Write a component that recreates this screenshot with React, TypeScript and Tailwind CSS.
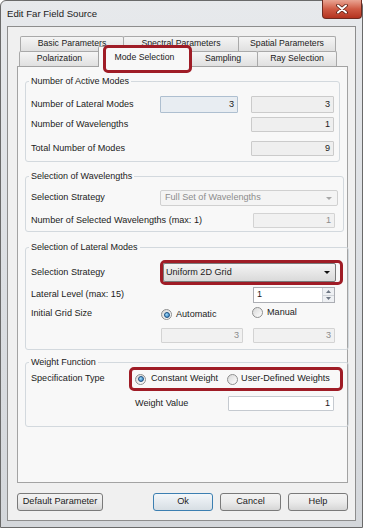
import type { ReactNode } from "react";

type Tone = "ro" | "focus" | "dis" | "white";

const toneClass: Record<Tone, string> = {
  ro: "bg-[#efefef] border-[#cbcbcb] text-[#1b1b1b]",
  focus: "bg-[#e8edf2] border-[#aebfd0] text-[#1b1b1b]",
  dis: "bg-[#f1f1f1] border-[#d3d3d3] text-[#8c8c8c]",
  white: "bg-white border-[#c5cad0] text-[#1b1b1b]",
};

const Box = ({ value, tone = "ro", className = "" }: { value: string; tone?: Tone; className?: string }) => (
  <div className={`flex shrink-0 items-center justify-end rounded-[1px] border pr-[3px] ${toneClass[tone]} ${className}`}>
    {value}
  </div>
);

const Radio = ({ checked = false }: { checked?: boolean }) => (
  <span className="flex h-[11px] w-[11px] shrink-0 items-center justify-center rounded-full border border-[#8e8f8f] bg-linear-to-br from-[#d8d8d8] to-white">
    {checked && (
      <span className="h-[6px] w-[6px] rounded-full border border-[#1b4f80] bg-[radial-gradient(circle_at_35%_35%,#9fdcfb,#2a74b8)]" />
    )}
  </span>
);

const Arrow = ({ color }: { color: string }) => (
  <svg width="6" height="3" viewBox="0 0 6 3">
    <polygon points="0,0 6,0 3,3" fill={color} />
  </svg>
);

const Tab = ({ children, className = "" }: { children: ReactNode; className?: string }) => (
  <div
    className={`-ml-px flex shrink-0 items-center justify-center rounded-t-[2px] border border-b-0 border-[#a9a9a9] bg-linear-to-b from-[#f5f5f5] to-[#e0e0e0] text-[8.7px] first:ml-0 ${className}`}
  >
    {children}
  </div>
);

const Group = ({ title, children, className = "" }: { title: string; children: ReactNode; className?: string }) => (
  <fieldset className={`rounded-[3px] border border-[#d3d9de] px-[5px] ${className}`}>
    <legend className="-ml-[2px] px-[2px] text-[9px] leading-[12px]">{title}</legend>
    {children}
  </fieldset>
);

const Button = ({ children, className = "", primary = false }: { children: ReactNode; className?: string; primary?: boolean }) => (
  <button
    className={`flex h-[18px] shrink-0 items-center justify-center rounded-[3px] border text-[9.2px] ${
      primary
        ? "border-[#3c7fb1] bg-linear-to-b from-[#f3f7fa] to-[#d7dee4]"
        : "border-[#7a7a7a] bg-linear-to-b from-[#f3f3f3] via-[#ebebeb] to-[#d6d6d6]"
    } ${className}`}
  >
    {children}
  </button>
);

const CloseButton = () => (
  <div className="-mt-px flex h-[19px] w-[40px] items-center justify-center rounded-b-[4px] border border-t-0 border-[#6e2a20] bg-linear-to-b from-[#e9a493] via-[#cf5a44] to-[#b3321f]">
    <svg width="12" height="10" viewBox="0 0 12 10">
      <path d="M2 1.5 L10 8.5 M10 1.5 L2 8.5" stroke="#5a1d12" strokeWidth="3.6" strokeLinecap="round" />
      <path d="M2 1.5 L10 8.5 M10 1.5 L2 8.5" stroke="#ffffff" strokeWidth="2" strokeLinecap="round" />
    </svg>
  </div>
);

export default function App() {
  return (
    <div className="h-[531px] w-[367px] bg-white font-['Liberation_Sans',Arial,sans-serif] text-[#1b1b1b]">
      <div className="flex h-[528px] w-[363px] flex-col rounded-t-[6px] border border-[#6a6a6a] bg-linear-to-b from-[#e7e9ec] via-[#dcdfe3] to-[#d4d7db]">
        {/* Title bar */}
        <div className="flex h-[25px] shrink-0 items-start justify-between">
          <span className="ml-[6px] mt-[7px] text-[9.6px] leading-[12px]">Edit Far Field Source</span>
          <CloseButton />
        </div>

        {/* Client area */}
        <div className="mx-[6px] mb-[6px] flex flex-1 flex-col border border-[#8d8d8d] bg-[#f0f0f0] pb-[9px] pl-[9px] pr-[7px] pt-[9px] text-[9.1px]">
          {/* Tabs */}
          <div className="flex h-[15px] pl-[3px]">
            <Tab className="w-[104px]">Basic Parameters</Tab>
            <Tab className="w-[116px]">Spectral Parameters</Tab>
            <Tab className="w-[98px]">Spatial Parameters</Tab>
          </div>
          <div className="flex h-[15px] pl-[2px]">
            <Tab className="w-[81px]">Polarization</Tab>
            <div className="relative z-10 -mx-[2px] -mt-[5px] flex h-[21px] w-[93px] shrink-0 items-start justify-center rounded-t-[2px] border border-b-0 border-[#a3a3a3] bg-[#f8f8f8] pt-[4px] text-[8.7px]">
              Mode Selection
              <div className="absolute left-[4px] top-[-2px] h-[28px] w-[89px] rounded-[5px] border-[3px] border-[#9f1c26]" />
            </div>
            <Tab className="w-[70px]">Sampling</Tab>
            <Tab className="w-[80px]">Ray Selection</Tab>
          </div>

          {/* Tab page */}
          <div className="flex flex-1 flex-col border border-[#a3a3a3] bg-[#f8f8f8] px-[7px] pt-[8px]">
            <Group title="Number of Active Modes" className="pb-[5px]">
              <div className="mt-[9px] flex h-[17px] items-center">
                <span className="w-[129px] shrink-0">Number of Lateral Modes</span>
                <Box tone="focus" value="3" className="h-[17px] w-[78px]" />
                <Box value="3" className="ml-[13px] h-[17px] w-[83px]" />
              </div>
              <div className="mt-[4px] flex h-[15px] items-center">
                <span className="w-[220px] shrink-0">Number of Wavelengths</span>
                <Box value="1" className="h-[15px] w-[83px]" />
              </div>
              <div className="mt-[9px] flex h-[15px] items-center">
                <span className="w-[220px] shrink-0">Total Number of Modes</span>
                <Box value="9" className="h-[15px] w-[83px]" />
              </div>
            </Group>

            <Group title="Selection of Wavelengths" className="mt-[8px] pb-[3px]">
              <div className="mt-[8px] flex h-[16px] items-center">
                <span className="w-[129px] shrink-0">Selection Strategy</span>
                <div className="flex h-[16px] w-[178px] shrink-0 items-center justify-between rounded-[2px] border border-[#d0d0d0] bg-[#f4f4f4] pl-[4px] pr-[5px] text-[#8c8c8c]">
                  Full Set of Wavelengths
                  <Arrow color="#a8a8a8" />
                </div>
              </div>
              <div className="mt-[7px] flex h-[15px] items-center">
                <span className="w-[222px] shrink-0">Number of Selected Wavelengths (max: 1)</span>
                <Box tone="dis" value="1" className="h-[15px] w-[82px]" />
              </div>
            </Group>

            <Group title="Selection of Lateral Modes" className="mt-[9px] pb-[6px]">
              <div className="mt-[7px] flex h-[25px] items-center">
                <span className="w-[129px] shrink-0">Selection Strategy</span>
                <div className="flex h-[25px] w-[183px] shrink-0 items-center rounded-[5px] border-[3px] border-[#9f1c26]">
                  <div className="flex h-[19px] w-[173px] items-center justify-between rounded-[2px] border border-[#7a7a7a] bg-linear-to-b from-[#f4f4f4] to-[#dadada] pl-[2px] pr-[5px]">
                    Uniform 2D Grid
                    <Arrow color="#111111" />
                  </div>
                </div>
              </div>
              <div className="mt-[2px] flex h-[16px] items-center">
                <span className="w-[222px] shrink-0">Lateral Level (max: 15)</span>
                <div className="flex h-[16px] w-[82px] shrink-0 items-center justify-between border border-[#abadb3] bg-white pl-[3px]">
                  1
                  <div className="flex h-full w-[12px] flex-col">
                    <div className="flex flex-1 items-center justify-center border-b border-l border-[#cfd3d8] bg-[#eef0f3]">
                      <svg width="5" height="3" viewBox="0 0 5 3">
                        <polygon points="0,3 5,3 2.5,0" fill="#6d7683" />
                      </svg>
                    </div>
                    <div className="flex flex-1 items-center justify-center border-l border-[#cfd3d8] bg-[#eef0f3]">
                      <svg width="5" height="3" viewBox="0 0 5 3">
                        <polygon points="0,0 5,0 2.5,3" fill="#6d7683" />
                      </svg>
                    </div>
                  </div>
                </div>
              </div>
              <div className="mt-[3px] flex h-[16px] items-center">
                <span className="w-[129px] shrink-0">Initial Grid Size</span>
                <div className="flex w-[92px] shrink-0 items-center pl-[1px] pt-[2px]">
                  <Radio checked />
                  <span className="ml-[4px]">Automatic</span>
                </div>
                <div className="flex items-center pb-[2px]">
                  <Radio />
                  <span className="ml-[4px]">Manual</span>
                </div>
              </div>
              <div className="mt-[6px] flex h-[15px] items-center pl-[130px]">
                <Box tone="dis" value="3" className="h-[15px] w-[82px]" />
                <Box tone="dis" value="3" className="ml-[10px] h-[15px] w-[82px]" />
              </div>
            </Group>

            <Group title="Weight Function" className="mt-[6px] pb-[15px]">
              <div className="-mt-px flex h-[24px] items-center">
                <span className="w-[98px] shrink-0">Specification Type</span>
                <div className="flex h-[24px] w-[214px] shrink-0 items-center rounded-[5px] border-[3px] border-[#9f1c26] pl-[3px]">
                  <Radio checked />
                  <span className="ml-[5px]">Constant Weight</span>
                  <span className="ml-[9px]">
                    <Radio />
                  </span>
                  <span className="ml-[3px]">User-Defined Weights</span>
                </div>
              </div>
              <div className="mt-[5px] flex h-[15px] items-center pl-[104px]">
                <span className="w-[93px] shrink-0">Weight Value</span>
                <Box tone="white" value="1" className="h-[15px] w-[106px]" />
              </div>
            </Group>
          </div>

          {/* Buttons */}
          <div className="mt-[10px] flex h-[18px] items-center">
            <Button className="w-[86px]">Default Parameter</Button>
            <Button primary className="ml-[50px] w-[60px]">Ok</Button>
            <Button className="ml-[7px] w-[61px]">Cancel</Button>
            <Button className="ml-[7px] w-[60px]">Help</Button>
          </div>
        </div>
      </div>
    </div>
  );
}
